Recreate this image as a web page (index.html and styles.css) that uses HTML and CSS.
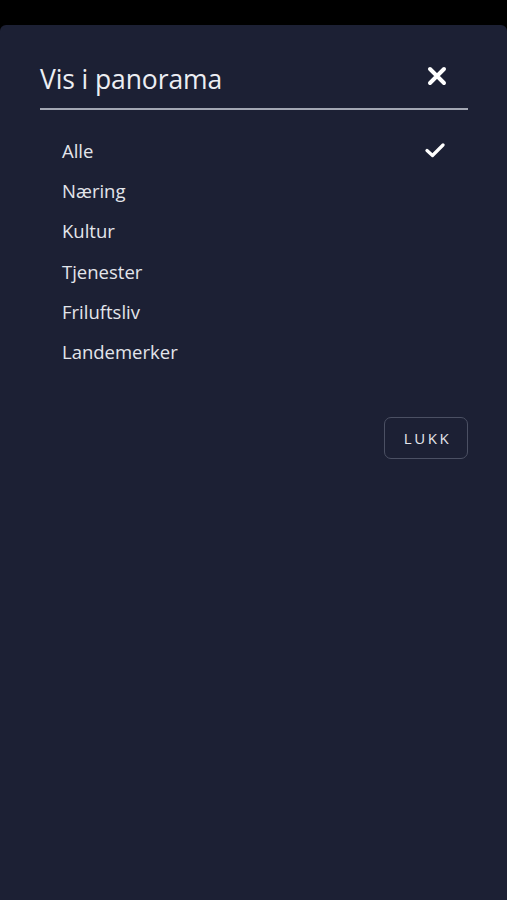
FILE: index.html
```html
<!DOCTYPE html>
<html lang="no">
<head>
  <meta charset="UTF-8">
  <meta name="viewport" content="width=device-width,initial-scale=1">
  <title>Vis i panorama</title>
  <link rel="stylesheet" href="styles.css">
</head>
<body>
  <div class="status-bar"></div>
  <div class="sheet">
    <div class="sheet-head">
      <h1 class="sheet-title">Vis i panorama</h1>
      <button class="close-btn" aria-label="Lukk">
        <svg width="20" height="20" viewBox="0 0 20 20">
          <path d="M3 3 L17 17 M17 3 L3 17" stroke="#fff" stroke-width="4" stroke-linecap="round"/>
        </svg>
      </button>
    </div>

    <ul class="filter-list">
      <li class="filter-item is-active">
        <span>Alle</span>
        <svg class="check" width="20" height="16" viewBox="0 0 20 16">
          <path d="M2 8.5 L7.5 13.5 L18 3" fill="none" stroke="#fff" stroke-width="3.2" stroke-linecap="round" stroke-linejoin="round"/>
        </svg>
      </li>
      <li class="filter-item"><span>Næring</span></li>
      <li class="filter-item"><span>Kultur</span></li>
      <li class="filter-item"><span>Tjenester</span></li>
      <li class="filter-item"><span>Friluftsliv</span></li>
      <li class="filter-item"><span>Landemerker</span></li>
    </ul>

    <div class="sheet-foot">
      <button class="btn-outline">LUKK</button>
    </div>
  </div>
</body>
</html>
```

FILE: styles.css
```css
html, body {
  margin: 0;
  padding: 0;
  background: #000;
  height: 100%;
}

body {
  font-family: "Open Sans", "Noto Sans", sans-serif;
  color: #e6e8ee;
  display: flex;
  flex-direction: column;
}

.status-bar {
  height: 25px;
  flex: none;
}

.sheet {
  flex: 1;
  background: #1c2034;
  border-radius: 6px 6px 0 0;
  padding: 34px 39px 0 40px;
}

.sheet-head {
  display: flex;
  align-items: center;
  justify-content: space-between;
  border-bottom: 2px solid #a3a7b3;
  height: 49px;
}

.sheet-title {
  margin: 0;
  font-size: 26.5px;
  font-weight: 400;
  letter-spacing: -0.1px;
  color: #eceef3;
  padding-bottom: 10px;
}

.close-btn {
  background: none;
  border: 0;
  padding: 0;
  margin-right: 21px;
  margin-bottom: 15px;
  display: flex;
}

.filter-list {
  list-style: none;
  margin: 0;
  padding: 20px 0 0;
}

.filter-item {
  height: 40.3px;
  display: flex;
  align-items: center;
  justify-content: space-between;
  padding: 0 22px;
  font-size: 18.5px;
  color: #e3e5eb;
}

.check {
  margin-right: 1px;
}

.sheet-foot {
  display: flex;
  justify-content: flex-end;
  margin-top: 45px;
}

.btn-outline {
  width: 84px;
  height: 42px;
  background: transparent;
  border: 1px solid #4b5063;
  border-radius: 7px;
  color: #e3e5eb;
  font-family: inherit;
  font-size: 15px;
  letter-spacing: 2.6px;
  padding: 0 0 0 3px;
}
```
